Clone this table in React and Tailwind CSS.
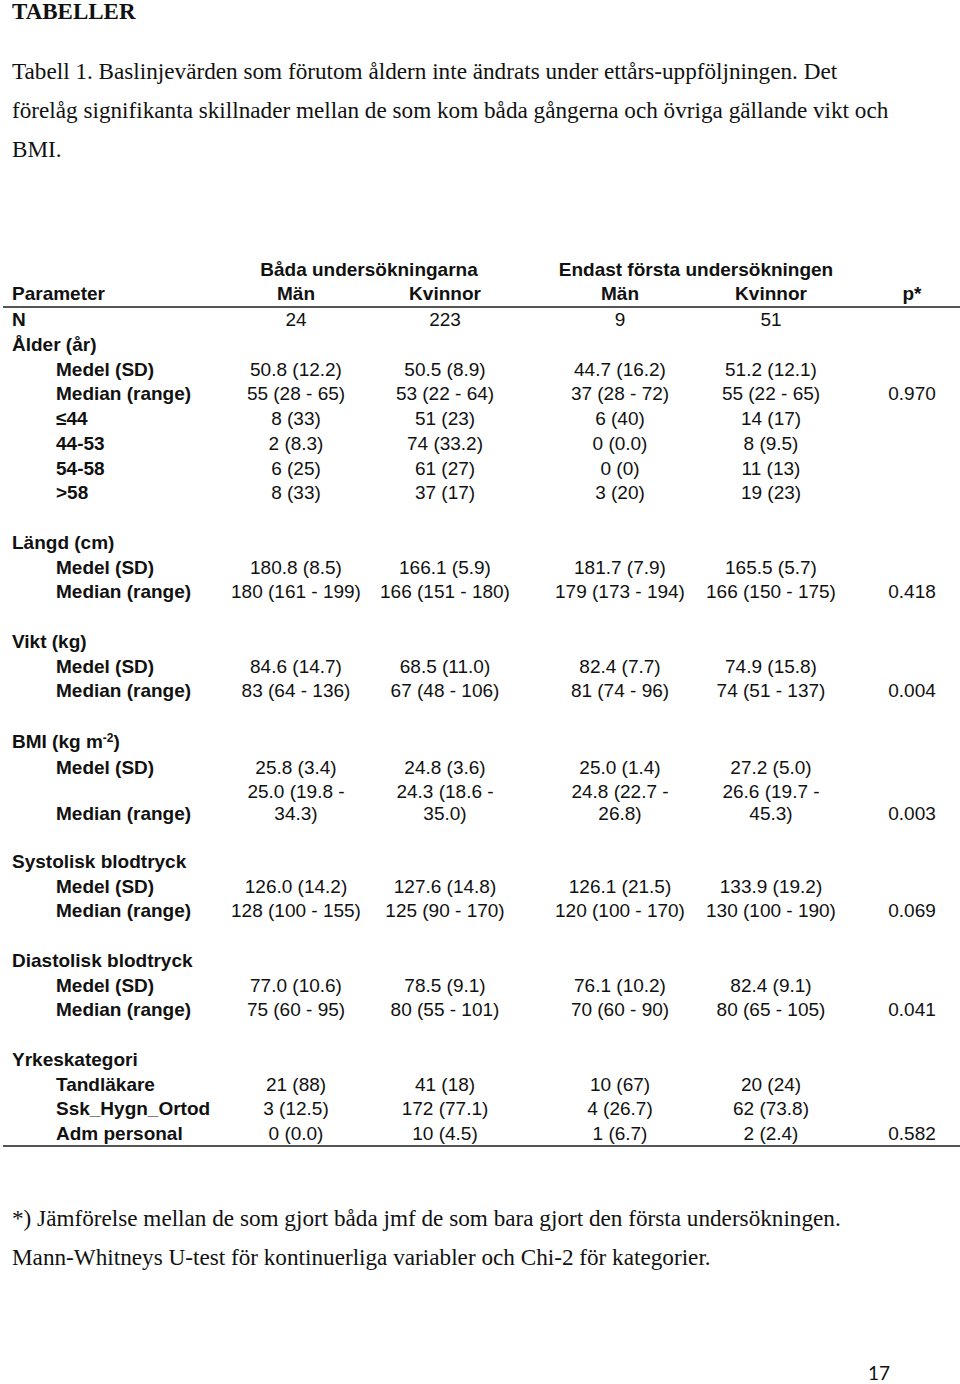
import React from 'react';

const serif = { fontFamily: '"Liberation Serif", "Times New Roman", serif' };

const rows = [
  { label: 'N', top: true, v: ['24', '223', '9', '51'] },
  { label: 'Ålder (år)', top: true },
  { label: 'Medel (SD)', v: ['50.8 (12.2)', '50.5 (8.9)', '44.7 (16.2)', '51.2 (12.1)'] },
  { label: 'Median (range)', v: ['55 (28 - 65)', '53 (22 - 64)', '37 (28 - 72)', '55 (22 - 65)'], p: '0.970' },
  { label: '≤44', v: ['8 (33)', '51 (23)', '6 (40)', '14 (17)'] },
  { label: '44-53', v: ['2 (8.3)', '74 (33.2)', '0 (0.0)', '8 (9.5)'] },
  { label: '54-58', v: ['6 (25)', '61 (27)', '0 (0)', '11 (13)'] },
  { label: '>58', v: ['8 (33)', '37 (17)', '3 (20)', '19 (23)'] },
  { blank: true },
  { label: 'Längd (cm)', top: true },
  { label: 'Medel (SD)', v: ['180.8 (8.5)', '166.1 (5.9)', '181.7 (7.9)', '165.5 (5.7)'] },
  { label: 'Median (range)', v: ['180 (161 - 199)', '166 (151 - 180)', '179 (173 - 194)', '166 (150 - 175)'], p: '0.418' },
  { blank: true },
  { label: 'Vikt (kg)', top: true },
  { label: 'Medel (SD)', v: ['84.6 (14.7)', '68.5 (11.0)', '82.4 (7.7)', '74.9 (15.8)'] },
  { label: 'Median (range)', v: ['83 (64 - 136)', '67 (48 - 106)', '81 (74 - 96)', '74 (51 - 137)'], p: '0.004' },
  { blank: true },
  { bmi: true },
  { label: 'Medel (SD)', v: ['25.8 (3.4)', '24.8 (3.6)', '25.0 (1.4)', '27.2 (5.0)'] },
  { label: 'Median (range)', tall: true, v: [['25.0 (19.8 -', '34.3)'], ['24.3 (18.6 -', '35.0)'], ['24.8 (22.7 -', '26.8)'], ['26.6 (19.7 -', '45.3)']], p: '0.003' },
  { blank: true },
  { label: 'Systolisk blodtryck', top: true },
  { label: 'Medel (SD)', v: ['126.0 (14.2)', '127.6 (14.8)', '126.1 (21.5)', '133.9 (19.2)'] },
  { label: 'Median (range)', v: ['128 (100 - 155)', '125 (90 - 170)', '120 (100 - 170)', '130 (100 - 190)'], p: '0.069' },
  { blank: true },
  { label: 'Diastolisk blodtryck', top: true },
  { label: 'Medel (SD)', v: ['77.0 (10.6)', '78.5 (9.1)', '76.1 (10.2)', '82.4 (9.1)'] },
  { label: 'Median (range)', v: ['75 (60 - 95)', '80 (55 - 101)', '70 (60 - 90)', '80 (65 - 105)'], p: '0.041' },
  { blank: true },
  { label: 'Yrkeskategori', top: true },
  { label: 'Tandläkare', v: ['21 (88)', '41 (18)', '10 (67)', '20 (24)'] },
  { label: 'Ssk_Hygn_Ortod', v: ['3 (12.5)', '172 (77.1)', '4 (26.7)', '62 (73.8)'] },
  { label: 'Adm personal', v: ['0 (0.0)', '10 (4.5)', '1 (6.7)', '2 (2.4)'], p: '0.582' },
];

const Cells = ({ v = [], p }) => {
  const cell = (x) => (Array.isArray(x) ? x.map((t, i) => <div key={i}>{t}</div>) : x);
  return (
    <>
      <div className="w-[152px] shrink-0 text-center whitespace-nowrap">{cell(v[0])}</div>
      <div className="w-[146px] shrink-0 text-center whitespace-nowrap">{cell(v[1])}</div>
      <div className="w-[160px] shrink-0 ml-[22px] text-center whitespace-nowrap">{cell(v[2])}</div>
      <div className="w-[142px] shrink-0 text-center whitespace-nowrap">{cell(v[3])}</div>
      <div className="w-[96px] shrink-0 ml-[22px] text-center whitespace-nowrap">{p}</div>
    </>
  );
};

const Row = ({ r }) => {
  if (r.blank) return <div className="h-[24.75px]" />;
  if (r.bmi) {
    return (
      <div className="flex h-[27px] items-center">
        <div className="w-[220px] shrink-0 pl-[12px] font-bold whitespace-nowrap">
          BMI (kg m<sup className="text-[12px]">-2</sup>)
        </div>
      </div>
    );
  }
  if (r.tall) {
    return (
      <div className="flex h-[44.5px] items-end leading-[22px]">
        <div className="w-[220px] shrink-0 pl-[56px] font-bold whitespace-nowrap">{r.label}</div>
        <Cells v={r.v} p={r.p} />
      </div>
    );
  }
  return (
    <div className="flex h-[24.75px] items-center">
      <div className={r.top ? 'w-[220px] shrink-0 pl-[12px] font-bold whitespace-nowrap' : 'w-[220px] shrink-0 pl-[56px] font-bold whitespace-nowrap'}>
        {r.label}
      </div>
      {r.v && <Cells v={r.v} p={r.p} />}
    </div>
  );
};

export default function App() {
  return (
    <div className="w-[960px] h-[1384px] bg-white text-[#111] overflow-hidden">
      <h1 style={serif} className="pl-[12px] text-[23px] font-bold leading-[24px]">TABELLER</h1>

      <p style={serif} className="mt-[28px] pl-[12px] text-[23.2px] leading-[39px] whitespace-nowrap">
        Tabell 1. Baslinjevärden som förutom åldern inte ändrats under ettårs-uppföljningen. Det
        <br />
        förelåg signifikanta skillnader mellan de som kom båda gångerna och övriga gällande vikt och
        <br />
        BMI.
      </p>

      <div className="mt-[89px] font-['Liberation_Sans',Arial,sans-serif] text-[19px] leading-[22px]">
        <div className="flex h-[24.75px] items-center font-bold">
          <div className="w-[220px] shrink-0" />
          <div className="w-[298px] shrink-0 text-center">Båda undersökningarna</div>
          <div className="w-[302px] shrink-0 ml-[22px] pl-[10px] text-center">Endast första undersökningen</div>
        </div>
        <div className="flex h-[23px] items-center font-bold">
          <div className="w-[220px] shrink-0 pl-[12px]">Parameter</div>
          <Cells v={['Män', 'Kvinnor', 'Män', 'Kvinnor']} p="p*" />
        </div>
        <div className="ml-[3px] h-[2px] bg-[#555]" />

        {rows.map((r, i) => (
          <Row key={i} r={r} />
        ))}
        <div className="ml-[3px] -mt-[2px] h-[2px] bg-[#555]" />
      </div>

      <div style={serif} className="mt-[52px] pl-[12px] text-[23.2px] leading-[39px] whitespace-nowrap">
        <div>*) Jämförelse mellan de som gjort båda jmf de som bara gjort den första undersökningen.</div>
        <div>Mann-Whitneys U-test för kontinuerliga variabler och Chi-2 för kategorier.</div>
      </div>

      <div className="mt-[84px] flex justify-end pr-[70px] font-['Lato',sans-serif] text-[19px] leading-[24px]">
        17
      </div>
    </div>
  );
}
